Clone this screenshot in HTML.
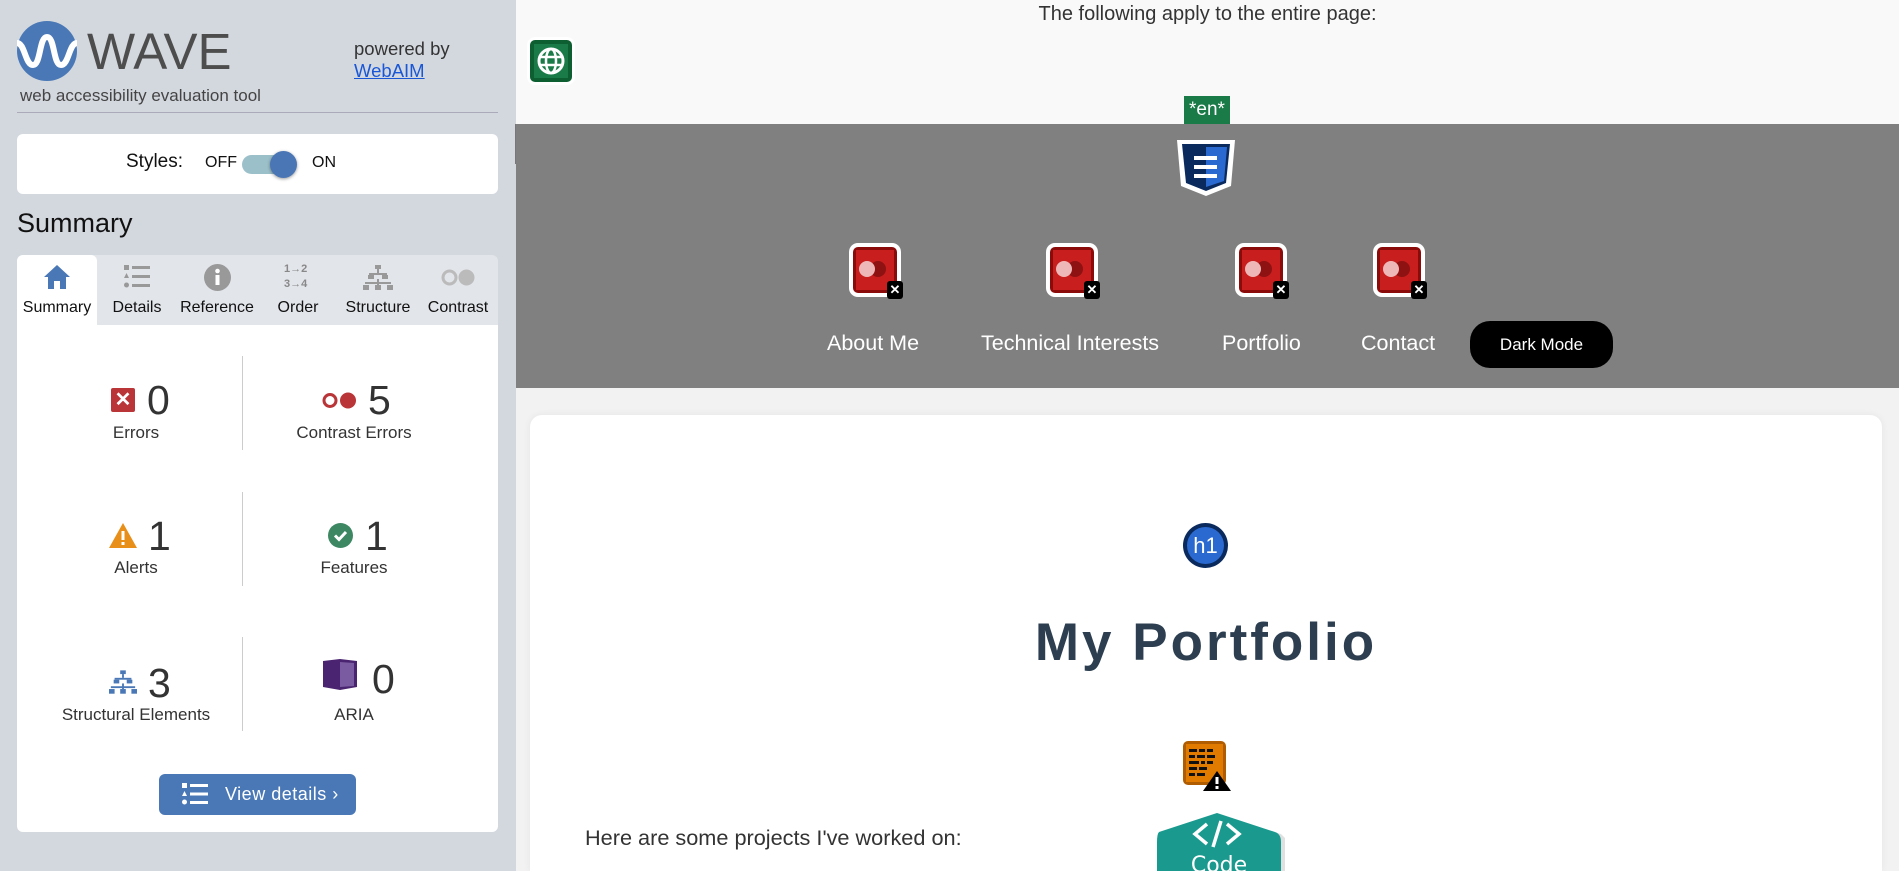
<!DOCTYPE html>
<html style="overflow:hidden;width:1899px;height:871px"><head><meta charset="utf-8"><style>
*{box-sizing:border-box;margin:0;padding:0}
body{width:1899px;height:871px;overflow:hidden;font-family:"Liberation Sans",sans-serif;background:#f2f2f2;position:relative}
.a{position:absolute}
#side{left:0;top:0;width:516px;height:871px;background:#d3d8df}
.c{text-align:center}
.num{font-size:41px;color:#333}
.lbl{font-size:17px;color:#333;width:220px;text-align:center}
.tab{font-size:16px;color:#111;text-align:center;width:80px;top:299px}
.vd{width:1px;background:#ccc}
.nav{color:#fff;font-size:21.5px;top:331px}
.ri{width:52px;height:54px;border-radius:9px;background:#fff;padding:4px}
.ri .in{width:100%;height:100%;border-radius:5px;background:#8b0a0a;padding:3px;position:relative}
.ri .in2{width:100%;height:100%;background:#c81e1e;position:relative}
.ri .d1{position:absolute;left:3px;top:11px;width:16px;height:16px;border-radius:50%;background:#efb8b8}
.ri .d2{position:absolute;left:14px;top:11px;width:16px;height:16px;border-radius:50%;background:#8e1212}
.ri .x{position:absolute;right:-6px;bottom:-6px;width:16px;height:18px;background:#000;border-radius:3px;color:#fff;font-size:13px;font-weight:bold;line-height:18px;text-align:center}
</style></head><body>
<div id="side" class="a">
  <svg class="a" style="left:17px;top:21px" width="60" height="60" viewBox="0 0 60 60"><circle cx="30" cy="30" r="30" fill="#4a78b6"/><path d="M0 22 C8 22 8 44 16 44 C24 44 22 16 30 16 C38 16 36 44 44 44 C52 44 52 22 60 22" stroke="#fff" stroke-width="6" fill="none"/></svg>
  <div class="a" style="left:87px;top:26px;font-size:51px;color:#4d4d4d;line-height:52px">WAVE</div>
  <div class="a" style="left:20px;top:86px;font-size:17px;color:#444">web accessibility evaluation tool</div>
  <div class="a" style="left:354px;top:38px;font-size:18.5px;color:#333">powered by</div>
  <div class="a" style="left:354px;top:60px;font-size:18.5px;color:#1a57d6;text-decoration:underline">WebAIM</div>
  <div class="a" style="left:17px;top:112px;width:481px;height:1px;background:#aab"></div>
  <div class="a" style="left:17px;top:134px;width:481px;height:60px;background:#fff;border-radius:6px"></div>
  <div class="a" style="left:126px;top:151px;font-size:19px;color:#111">Styles:</div>
  <div class="a" style="left:205px;top:154px;font-size:16px;color:#111">OFF</div>
  <div class="a" style="left:242px;top:155px;width:52px;height:19px;border-radius:10px;background:#9cc0c9"></div>
  <div class="a" style="left:270px;top:151px;width:27px;height:27px;border-radius:50%;background:#4a76b6;box-shadow:0 1px 3px rgba(0,0,0,.4)"></div>
  <div class="a" style="left:312px;top:154px;font-size:16px;color:#111">ON</div>
  <div class="a" style="left:17px;top:208px;font-size:27px;color:#111">Summary</div>
  <div class="a" style="left:17px;top:255px;width:481px;height:70px;background:#e2e5ea;border-radius:6px 6px 0 0"></div>
  <div class="a" style="left:17px;top:255px;width:80px;height:70px;background:#fff;border-radius:6px 6px 0 0"></div>
  <div class="a" style="left:17px;top:325px;width:481px;height:507px;background:#fff;border-radius:0 0 6px 6px"></div>
  <svg class="a" style="left:43px;top:264px" width="28" height="26" viewBox="0 0 28 26"><path d="M14 1 L27 13 L23 13 L23 25 L17 25 L17 17 L11 17 L11 25 L5 25 L5 13 L1 13 Z" fill="#4a78b6"/></svg>
  <svg class="a" style="left:124px;top:265px" width="26" height="24" viewBox="0 0 26 24" fill="#999"><rect x="0" y="0" width="5" height="5"/><rect x="8" y="1" width="18" height="3"/><path d="M2.5 8 L5 13 L0 13Z"/><rect x="8" y="10" width="18" height="3"/><circle cx="2.5" cy="20" r="2.5"/><rect x="8" y="19" width="18" height="3"/></svg>
  <svg class="a" style="left:204px;top:264px" width="27" height="27" viewBox="0 0 27 27"><circle cx="13.5" cy="13.5" r="13.5" fill="#999"/><rect x="11.5" y="11" width="4" height="10" fill="#fff"/><circle cx="13.5" cy="7" r="2.3" fill="#fff"/></svg>
  <div class="a" style="left:284px;top:262px;font-size:11px;color:#888;font-weight:bold;line-height:15px">1→2<br>3→4</div>
  <svg class="a" style="left:363px;top:265px" width="30" height="26" viewBox="0 0 30 26" fill="#999"><rect x="12" y="0" width="6" height="4"/><rect x="14" y="4" width="2" height="4"/><rect x="6" y="8" width="18" height="2"/><rect x="5" y="10" width="6" height="4"/><rect x="19" y="10" width="6" height="4"/><rect x="2" y="17" width="26" height="2"/><rect x="0" y="20" width="6" height="5"/><rect x="12" y="20" width="6" height="5"/><rect x="24" y="20" width="6" height="5"/><rect x="14" y="14" width="2" height="6"/></svg>
  <svg class="a" style="left:441px;top:269px" width="34" height="17" viewBox="0 0 34 17"><circle cx="8.5" cy="8.5" r="6.5" fill="none" stroke="#bbb" stroke-width="3"/><circle cx="25.5" cy="8.5" r="8" fill="#bbb"/></svg>
  <div class="a tab" style="left:17px">Summary</div>
  <div class="a tab" style="left:97px">Details</div>
  <div class="a tab" style="left:172px;width:90px">Reference</div>
  <div class="a tab" style="left:258px">Order</div>
  <div class="a tab" style="left:333px;width:90px">Structure</div>
  <div class="a tab" style="left:418px">Contrast</div>
  <div class="a vd" style="left:242px;top:356px;height:94px"></div>
  <div class="a vd" style="left:242px;top:492px;height:94px"></div>
  <div class="a vd" style="left:242px;top:637px;height:94px"></div>
  <div class="a" style="left:111px;top:388px;width:24px;height:24px;background:#b93538;border-radius:2px;color:#fff;font-size:20px;font-weight:bold;text-align:center;line-height:24px">✕</div>
  <div class="a num" style="left:147px;top:377px">0</div>
  <div class="a lbl" style="left:26px;top:423px">Errors</div>
  <svg class="a" style="left:322px;top:392px" width="36" height="17" viewBox="0 0 36 17"><circle cx="8" cy="8.5" r="6" fill="none" stroke="#b93538" stroke-width="3"/><circle cx="26" cy="8.5" r="8" fill="#b93538"/></svg>
  <div class="a num" style="left:368px;top:377px">5</div>
  <div class="a lbl" style="left:244px;top:423px">Contrast Errors</div>
  <svg class="a" style="left:109px;top:523px" width="28" height="25" viewBox="0 0 28 25"><path d="M14 0 L28 25 L0 25Z" fill="#e88f1a"/><rect x="12.5" y="8" width="3" height="9" fill="#fff"/><rect x="12.5" y="19" width="3" height="3" fill="#fff"/></svg>
  <div class="a num" style="left:148px;top:513px">1</div>
  <div class="a lbl" style="left:26px;top:558px">Alerts</div>
  <svg class="a" style="left:328px;top:523px" width="25" height="25" viewBox="0 0 25 25"><circle cx="12.5" cy="12.5" r="12.5" fill="#3e8763"/><path d="M7 12.5 L11 16.5 L18 9" stroke="#fff" stroke-width="3" fill="none"/></svg>
  <div class="a num" style="left:365px;top:513px">1</div>
  <div class="a lbl" style="left:244px;top:558px">Features</div>
  <svg class="a" style="left:109px;top:670px" width="28" height="25" viewBox="0 0 30 26" fill="#4a78b6"><rect x="12" y="0" width="6" height="4"/><rect x="14" y="4" width="2" height="4"/><rect x="6" y="8" width="18" height="2"/><rect x="5" y="10" width="6" height="4"/><rect x="19" y="10" width="6" height="4"/><rect x="2" y="17" width="26" height="2"/><rect x="0" y="20" width="6" height="5"/><rect x="12" y="20" width="6" height="5"/><rect x="24" y="20" width="6" height="5"/><rect x="14" y="14" width="2" height="6"/></svg>
  <div class="a num" style="left:148px;top:660px">3</div>
  <div class="a lbl" style="left:26px;top:705px">Structural Elements</div>
  <svg class="a" style="left:323px;top:659px" width="34" height="31" viewBox="0 0 34 31"><path d="M0 2 L17 0 L34 2 L34 28 L17 31 L0 28Z" fill="#4a2470"/><path d="M17 3 L31 4 L31 27 L17 28Z" fill="#7a5aa0"/></svg>
  <div class="a num" style="left:372px;top:656px">0</div>
  <div class="a lbl" style="left:244px;top:705px">ARIA</div>
  <div class="a" style="left:159px;top:774px;width:197px;height:41px;background:#4a78b6;border-radius:6px"></div>
  <svg class="a" style="left:182px;top:783px" width="26" height="22" viewBox="0 0 26 22" fill="#fff"><rect x="0" y="0" width="5" height="5"/><rect x="8" y="1" width="18" height="3"/><path d="M2.5 8 L5 13 L0 13Z"/><rect x="8" y="9.5" width="18" height="3"/><circle cx="2.5" cy="19" r="2.5"/><rect x="8" y="18" width="18" height="3"/></svg>
  <div class="a" style="left:225px;top:784px;font-size:18px;color:#fff;letter-spacing:.5px">View details ›</div>
  <div class="a" style="left:515px;top:124px;width:4px;height:40px;background:#777"></div>
</div>
<div class="a" style="left:516px;top:0;width:1383px;height:124px;background:#f9f9f9"></div>
<div class="a c" style="left:516px;top:3px;width:1383px;font-size:20px;color:#333">The following apply to the entire page:</div>
<div class="a" style="left:527px;top:37px;width:48px;height:48px;background:#fff;border-radius:8px;padding:3px"><div style="width:100%;height:100%;background:#0d5e30;border-radius:5px;padding:4px"><svg width="34" height="34" viewBox="0 0 34 34"><rect width="34" height="34" fill="#1a7a48"/><circle cx="17" cy="17" r="12" fill="none" stroke="#fff" stroke-width="3"/><ellipse cx="17" cy="17" rx="5" ry="12" fill="none" stroke="#fff" stroke-width="2.5"/><path d="M5 13 H29 M5 21 H29" stroke="#fff" stroke-width="2.5"/></svg></div></div>
<div class="a" style="left:1184px;top:96px;width:46px;height:28px;background:#1a7a48;color:#fff;font-size:19px;text-align:center;line-height:28px">*en*</div>
<div class="a" style="left:516px;top:124px;width:1383px;height:264px;background:#808080"></div>
<svg class="a" style="left:1177px;top:140px" width="58" height="56" viewBox="0 0 58 56"><path d="M0 0 H58 L54 46 L29 56 L4 46Z" fill="#fff"/><path d="M5 4 H53 L49 43 L29 51 L9 43Z" fill="#0a2a5e"/><path d="M29 7 H50 L47 41 L29 47Z" fill="#2a6ad0"/><rect x="17" y="16" width="23" height="4" fill="#fff"/><rect x="17" y="25" width="23" height="4" fill="#fff"/><rect x="17" y="34" width="23" height="4" fill="#fff"/></svg>
<div class="a ri" style="left:849px;top:243px"><div class="in"><div class="in2"><div class="d2"></div><div class="d1"></div></div><div class="x">✕</div></div></div>
<div class="a ri" style="left:1046px;top:243px"><div class="in"><div class="in2"><div class="d2"></div><div class="d1"></div></div><div class="x">✕</div></div></div>
<div class="a ri" style="left:1235px;top:243px"><div class="in"><div class="in2"><div class="d2"></div><div class="d1"></div></div><div class="x">✕</div></div></div>
<div class="a ri" style="left:1373px;top:243px"><div class="in"><div class="in2"><div class="d2"></div><div class="d1"></div></div><div class="x">✕</div></div></div>
<div class="a nav" style="left:827px">About Me</div>
<div class="a nav" style="left:981px">Technical Interests</div>
<div class="a nav" style="left:1222px">Portfolio</div>
<div class="a nav" style="left:1361px">Contact</div>
<div class="a" style="left:1470px;top:321px;width:143px;height:47px;background:#000;border-radius:20px;color:#fff;font-size:17px;text-align:center;line-height:47px">Dark Mode</div>
<div class="a" style="left:530px;top:415px;width:1352px;height:456px;background:#fff;border-radius:12px 12px 0 0;box-shadow:0 0 8px rgba(0,0,0,.06)"></div>
<div class="a" style="left:1183px;top:523px;width:45px;height:45px;border-radius:50%;background:#0a2a5e;padding:4px"><div style="width:100%;height:100%;border-radius:50%;background:#2a6ad0;color:#fff;font-size:22px;text-align:center;line-height:37px">h1</div></div>
<div class="a c" style="left:530px;top:612px;width:1352px;font-size:53px;font-weight:bold;color:#2c3e50;letter-spacing:3px">My Portfolio</div>
<svg class="a" style="left:1183px;top:741px" width="48" height="50" viewBox="0 0 48 50"><rect x="0" y="0" width="43" height="44" rx="5" fill="#b05c00"/><rect x="3" y="3" width="37" height="38" fill="#e07b00"/><g fill="#111"><rect x="6" y="8" width="8" height="3"/><rect x="16" y="8" width="6" height="3"/><rect x="24" y="8" width="6" height="3"/><rect x="6" y="14" width="6" height="3"/><rect x="14" y="14" width="8" height="3"/><rect x="24" y="14" width="8" height="3"/><rect x="6" y="20" width="10" height="3"/><rect x="18" y="20" width="4" height="3"/><rect x="24" y="20" width="6" height="3"/><rect x="6" y="26" width="8" height="3"/><rect x="16" y="26" width="8" height="3"/><rect x="6" y="32" width="6" height="3"/><rect x="14" y="32" width="8" height="3"/></g><path d="M34 30 L48 50 L20 50Z" fill="#000"/><rect x="32.5" y="36" width="3" height="7" fill="#fff"/><rect x="32.5" y="45" width="3" height="3" fill="#fff"/></svg>
<div class="a" style="left:585px;top:825px;font-size:21.7px;color:#333">Here are some projects I've worked on:</div>
<svg class="a" style="left:1155px;top:812px" width="136" height="59" viewBox="0 0 136 59"><path d="M8 22 L66 4 L126 22 L130 26 L130 59 L8 59Z" fill="#000" opacity=".12"/><path d="M4 20 L62 1 L120 20 Q126 22 126 30 L126 59 L2 59 L2 30 Q2 22 4 20Z" fill="#1a9a8e"/><path d="M52 12 L40 22 L52 32 M72 12 L84 22 L72 32 M66 9 L58 35" stroke="#fff" stroke-width="3.5" fill="none"/><text x="64" y="60" text-anchor="middle" font-family="DejaVu Sans" font-size="22" fill="#fff">Code</text></svg>
</body></html>
